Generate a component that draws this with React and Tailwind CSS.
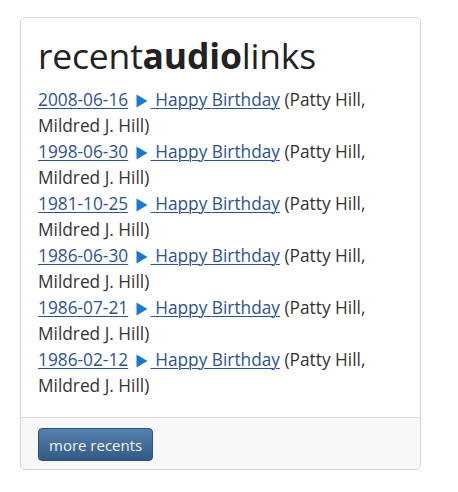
const ENTRIES = [
  '2008-06-16',
  '1998-06-30',
  '1981-10-25',
  '1986-06-30',
  '1986-07-21',
  '1986-02-12',
]

function Play() {
  return (
    <svg width="12" height="14" viewBox="0 0 12 14" className="inline-block align-[-2px] ml-[3px] mr-[3px]">
      <path d="M0.5 0.5 L11.5 7 L0.5 13.5 Z" fill="#1a78cf" />
    </svg>
  )
}

export default function App() {
  return (
    <div className="min-h-screen bg-white pt-[17px] pl-[20px] font-['Open_Sans',sans-serif] text-[#333]">
      <div className="w-[401px] h-[453px] border border-[#d4d4d4] rounded-[5px] flex flex-col overflow-hidden">
        {/* Body */}
        <div className="flex-1 px-[17px] pt-[15px]">
          <h2 className="text-[35.5px] leading-[44px] text-[#222] tracking-[-0.2px]">
            recent<span className="font-bold">audio</span>links
          </h2>
          <ul className="mt-[10px] text-[17.3px] leading-[26px]">
            {ENTRIES.map((date, i) => (
              <li key={i}>
                <a href="#" className="text-[#2e5390] underline underline-offset-[2px] decoration-1">{date}</a>{' '}
                <Play />
                <a href="#" className="text-[#2e5390] underline underline-offset-[2px] decoration-1">
                  {'\u00a0'}Happy Birthday
                </a>{' '}
                (Patty Hill, Mildred J. Hill)
              </li>
            ))}
          </ul>
        </div>
        {/* Footer */}
        <div className="h-[52px] bg-[#f7f7f7] border-t border-[#dcdcdc] px-[17px] pt-[10px]">
          <button className="h-[33px] px-[10px] rounded-[4px] border border-[#2f5179] bg-gradient-to-b from-[#5580ae] to-[#335a86] text-[#f0f4f8] text-[15px] leading-[20px]">
            more recents
          </button>
        </div>
      </div>
    </div>
  )
}
